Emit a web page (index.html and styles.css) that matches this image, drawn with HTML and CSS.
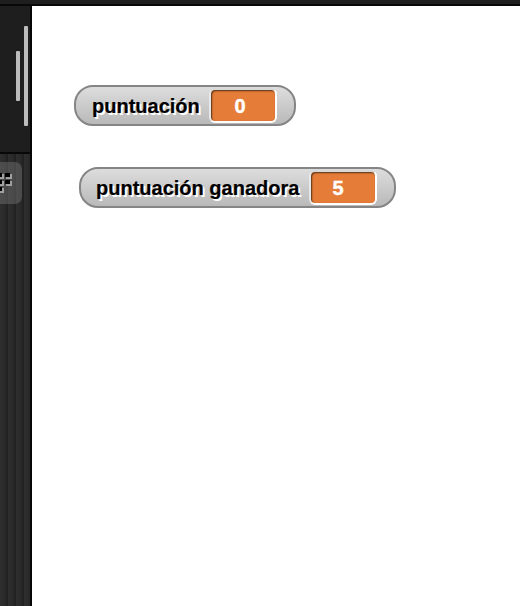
FILE: index.html
```
<!DOCTYPE html>
<html lang="es">
<head>
<meta charset="utf-8">
<title>Puntuación</title>
<link rel="stylesheet" href="styles.css">
</head>
<body>
<div class="topbar"></div>
<div class="workspace">
  <aside class="sidebar">
    <div class="panel">
      <span class="scroll scroll-short"></span>
      <span class="scroll scroll-long"></span>
    </div>
    <div class="corral">
      <div class="tile">
        <svg class="grid-icon" width="13" height="22" viewBox="0 0 13 22">
          <path fill="#a0a0a0" d="M0 3h4v5H0zM6 3h6v5H6zM0 10h4v5H0zM6 10h6v5H6zM0 17h4v5H0z"/>
          <path fill="#000" d="M0 2h2v4H0zM5 2h5v4H5zM0 9h2v4H0zM5 9h5v4H5zM0 16h2v4H0z"/>
        </svg>
      </div>
    </div>
  </aside>
  <main class="stage">
    <div class="watcher score"><span class="label">puntuación</span><span class="value">0</span></div>
    <div class="watcher winning"><span class="label">puntuación ganadora</span><span class="value">5</span></div>
  </main>
</div>
</body>
</html>
```

FILE: styles.css
```
* { box-sizing: border-box; }
body {
  margin: 0;
  height: 606px;
  overflow: hidden;
  display: flex;
  flex-direction: column;
  background: #fff;
  font-family: "Liberation Sans", Arial, sans-serif;
}
.topbar { height: 6px; flex: none; background: #1e1e1e; border-bottom: 2px solid #080808; }
.workspace { display: flex; flex: 1; }
.sidebar {
  width: 32px;
  display: flex;
  flex-direction: column;
  border-right: 2px solid #080604;
}
.panel {
  height: 148px;
  display: flex;
  align-items: flex-start;
  gap: 4px;
  padding: 20px 0 0 16px;
  background: #1e1e1e;
  border-bottom: 2px solid #080808;
}
.scroll { width: 4px; border-radius: 1px; background: #bcbcbc; }
.scroll-short { height: 50px; margin-top: 25px; }
.scroll-long { height: 100px; }
.corral {
  flex: 1;
  padding-top: 8px;
  background: repeating-linear-gradient(90deg, #2f2f2f 0, #282828 6px, #1c1c1c 7px, #282828 8px);
}
.tile {
  width: 22px;
  height: 42px;
  padding-top: 9px;
  border-radius: 0 7px 7px 0;
  background: rgba(116, 116, 116, .46);
}
.grid-icon { display: block; }
.stage { flex: 1; padding: 79px 0 0 42px; }
.watcher {
  height: 41px;
  display: flex;
  align-items: center;
  border: 2px solid #858585;
  border-radius: 19px;
  background: linear-gradient(#dddddd, #b9b9b9);
}
.score { width: 222px; padding-left: 16px; }
.winning { width: 317px; margin: 41px 0 0 5px; padding-left: 15px; }
.label {
  width: 108px;
  font-size: 20px;
  line-height: 24px;
  font-weight: bold;
  white-space: nowrap;
  color: #000;
  -webkit-text-stroke: .2px #000;
  text-shadow: 2px 2px 0 #fff;
}
.winning .label { width: 204px; }
.value {
  width: 68px;
  height: 35px;
  margin-left: 9px;
  border: 2px solid;
  border-color: #d8d8d8 #fff #fff #e8e8e8;
  border-radius: 6px;
  background: #e57c38;
  box-shadow: inset 1px 1px 2px #6b3d1c, inset 1px 1px 0 #84502c;
  color: #fff;
  -webkit-text-stroke: .4px #fff;
  font-size: 20px;
  line-height: 32px;
  font-weight: bold;
  text-align: center;
  padding-right: 6px;
}
.winning .value { padding-right: 10px; }
```
